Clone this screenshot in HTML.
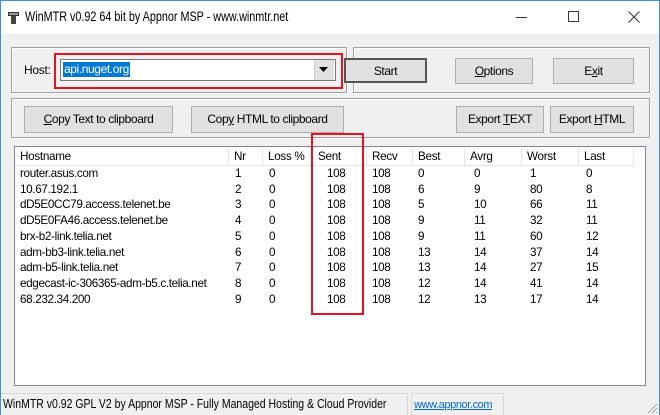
<!DOCTYPE html>
<html><head><meta charset="utf-8"><style>
*{margin:0;padding:0;box-sizing:border-box}
body{width:660px;height:415px;overflow:hidden;background:#f0f0f0;font-family:"Liberation Sans",sans-serif;font-size:12px;color:#000;position:relative}
.a{position:absolute;white-space:nowrap}
.frame{left:0;top:0;width:660px;height:415px;border:1px solid #3c8fd8;border-bottom:none}
.title{left:1px;top:1px;width:658px;height:33px;background:#fff}
.grp{border:1px solid #a0a0a0;box-shadow:inset 1px 1px 0 #fff,1px 1px 0 #fff}
.btn{background:#e1e1e1;border:1px solid #adadad;text-align:center;font-size:12px;letter-spacing:-0.4px}
.u{text-decoration:underline}
.red{border:2px solid #e81123}
.row{position:absolute;left:0;height:16px;font-size:11.7px;letter-spacing:-0.35px;white-space:nowrap}
.row span{position:absolute}
.hd span{position:absolute;top:0;height:17px;border-right:1px solid #e5e5e5;padding-left:5px;line-height:17px;font-size:11.7px;letter-spacing:-0.3px}
</style></head><body>
<div class="a title"></div>
<div class="a frame"></div>
<div class="a" style="left:8px;top:10px;width:11px;height:14px">
<svg width="11" height="14"><rect x="0" y="2" width="11" height="4" fill="#333"/><rect x="3" y="6" width="5" height="8" fill="#444"/><rect x="1" y="3" width="9" height="2" fill="#999"/></svg></div>
<div class="a" style="left:25px;top:9px;font-size:13.5px;color:#000;transform:scaleX(0.8);transform-origin:0 0">WinMTR v0.92 64 bit by Appnor MSP - www.winmtr.net</div>
<div class="a" style="left:516px;top:17px;width:11px;height:1px;background:#333"></div>
<div class="a" style="left:568px;top:11px;width:11px;height:11px;border:1px solid #333"></div>
<svg class="a" style="left:628px;top:11px" width="12" height="12"><path d="M0.5 0.5L11.5 11.5M11.5 0.5L0.5 11.5" stroke="#333" stroke-width="1"/></svg>

<div class="a grp" style="left:11px;top:47px;width:336px;height:46px"></div>
<div class="a grp" style="left:353px;top:47px;width:297px;height:46px"></div>
<div class="a grp" style="left:11px;top:98px;width:639px;height:40px"></div>

<div class="a" style="left:24px;top:63px;letter-spacing:-0.3px">Host:</div>
<div class="a" style="left:60px;top:59px;width:276px;height:22px;background:#fff;border:1px solid #7a7a7a"></div>
<div class="a" style="left:63px;top:62px;height:15px;background:#0078d7;color:#fff;padding:0 1px;line-height:15px;letter-spacing:-0.4px">api.nuget.org</div>
<div class="a" style="left:314px;top:60px;width:20px;height:20px;background:#e1e1e1;border-left:1px solid #ccc"></div>
<svg class="a" style="left:319px;top:67px" width="9" height="5"><path d="M0 0H9L4.5 5Z" fill="#000"/></svg>
<div class="a red" style="left:54px;top:53px;width:289px;height:36px"></div>

<div class="a btn" style="left:344px;top:58px;width:83px;height:25px;line-height:23px;border:2px solid #555">Start</div>
<div class="a btn" style="left:455px;top:58px;width:78px;height:26px;line-height:24px"><span class="u">O</span>ptions</div>
<div class="a btn" style="left:553px;top:58px;width:81px;height:26px;line-height:24px">E<span class="u">x</span>it</div>

<div class="a btn" style="left:24px;top:106px;width:149px;height:27px;line-height:25px"><span class="u">C</span>opy Text to clipboard</div>
<div class="a btn" style="left:191px;top:106px;width:153px;height:27px;line-height:25px">Cop<span class="u">y</span> HTML to clipboard</div>
<div class="a btn" style="left:456px;top:106px;width:88px;height:27px;line-height:25px">Export <span class="u">T</span>EXT</div>
<div class="a btn" style="left:550px;top:106px;width:84px;height:27px;line-height:25px">Export <span class="u">H</span>TML</div>

<div class="a" style="left:14px;top:146px;width:632px;height:240px;background:#fff;border:1px solid #828790">
 <div class="a hd" style="left:0;top:1px;width:619px;height:18px;border-bottom:1px solid #e5e5e5">
  <span style="left:0;width:214px">Hostname</span><span style="left:214px;width:34px">Nr</span><span style="left:248px;width:50px">Loss %</span><span style="left:298px;width:54px">Sent</span><span style="left:352px;width:46px">Recv</span><span style="left:398px;width:52px">Best</span><span style="left:450px;width:57px">Avrg</span><span style="left:507px;width:57px">Worst</span><span style="left:564px;width:55px">Last</span>
 </div>
 <div class="a" style="left:1px;top:20px;width:630px">
 <div class="row" style="top:0"><span style="left:4px">router.asus.com</span><span style="left:219px">1</span><span style="left:253px">0</span><span style="left:311px">108</span><span style="left:356px">108</span><span style="left:402px">0</span><span style="left:458px">0</span><span style="left:514px">1</span><span style="left:570px">0</span></div>
 <div class="row" style="top:15.7px"><span style="left:4px">10.67.192.1</span><span style="left:219px">2</span><span style="left:253px">0</span><span style="left:311px">108</span><span style="left:356px">108</span><span style="left:402px">6</span><span style="left:458px">9</span><span style="left:514px">80</span><span style="left:570px">8</span></div>
 <div class="row" style="top:31.4px"><span style="left:4px">dD5E0CC79.access.telenet.be</span><span style="left:219px">3</span><span style="left:253px">0</span><span style="left:311px">108</span><span style="left:356px">108</span><span style="left:402px">5</span><span style="left:458px">10</span><span style="left:514px">66</span><span style="left:570px">11</span></div>
 <div class="row" style="top:47.1px"><span style="left:4px">dD5E0FA46.access.telenet.be</span><span style="left:219px">4</span><span style="left:253px">0</span><span style="left:311px">108</span><span style="left:356px">108</span><span style="left:402px">9</span><span style="left:458px">11</span><span style="left:514px">32</span><span style="left:570px">11</span></div>
 <div class="row" style="top:62.8px"><span style="left:4px">brx-b2-link.telia.net</span><span style="left:219px">5</span><span style="left:253px">0</span><span style="left:311px">108</span><span style="left:356px">108</span><span style="left:402px">9</span><span style="left:458px">11</span><span style="left:514px">60</span><span style="left:570px">12</span></div>
 <div class="row" style="top:78.5px"><span style="left:4px">adm-bb3-link.telia.net</span><span style="left:219px">6</span><span style="left:253px">0</span><span style="left:311px">108</span><span style="left:356px">108</span><span style="left:402px">13</span><span style="left:458px">14</span><span style="left:514px">37</span><span style="left:570px">14</span></div>
 <div class="row" style="top:94.2px"><span style="left:4px">adm-b5-link.telia.net</span><span style="left:219px">7</span><span style="left:253px">0</span><span style="left:311px">108</span><span style="left:356px">108</span><span style="left:402px">13</span><span style="left:458px">14</span><span style="left:514px">27</span><span style="left:570px">15</span></div>
 <div class="row" style="top:109.9px"><span style="left:4px">edgecast-ic-306365-adm-b5.c.telia.net</span><span style="left:219px">8</span><span style="left:253px">0</span><span style="left:311px">108</span><span style="left:356px">108</span><span style="left:402px">12</span><span style="left:458px">14</span><span style="left:514px">41</span><span style="left:570px">14</span></div>
 <div class="row" style="top:125.6px"><span style="left:4px">68.232.34.200</span><span style="left:219px">9</span><span style="left:253px">0</span><span style="left:311px">108</span><span style="left:356px">108</span><span style="left:402px">12</span><span style="left:458px">13</span><span style="left:514px">17</span><span style="left:570px">14</span></div>
 </div>
</div>
<div class="a red" style="left:311px;top:133px;width:53px;height:182px"></div>

<div class="a" style="left:1px;top:393px;width:407px;height:22px;border-top:1px solid #d7d7d7;border-right:1px solid #d7d7d7"></div>
<div class="a" style="left:3px;top:397px;font-size:12.5px;transform:scaleX(0.84);transform-origin:0 0">WinMTR v0.92 GPL V2 by Appnor MSP - Fully Managed Hosting &amp; Cloud Provider</div>
<div class="a" style="left:411px;top:393px;width:93px;height:22px;border-top:1px solid #d7d7d7;border-left:1px solid #d7d7d7;border-right:1px solid #d7d7d7"></div>
<div class="a" style="left:414px;top:399px;font-size:11px;color:#0066cc;text-decoration:underline;letter-spacing:-0.4px">www.appnor.com</div>
<svg class="a" style="left:646px;top:402px" width="12" height="12"><path d="M11 2L2 11M11 6L6 11M11 10L10 11" stroke="#aaa"/></svg>
</body></html>
